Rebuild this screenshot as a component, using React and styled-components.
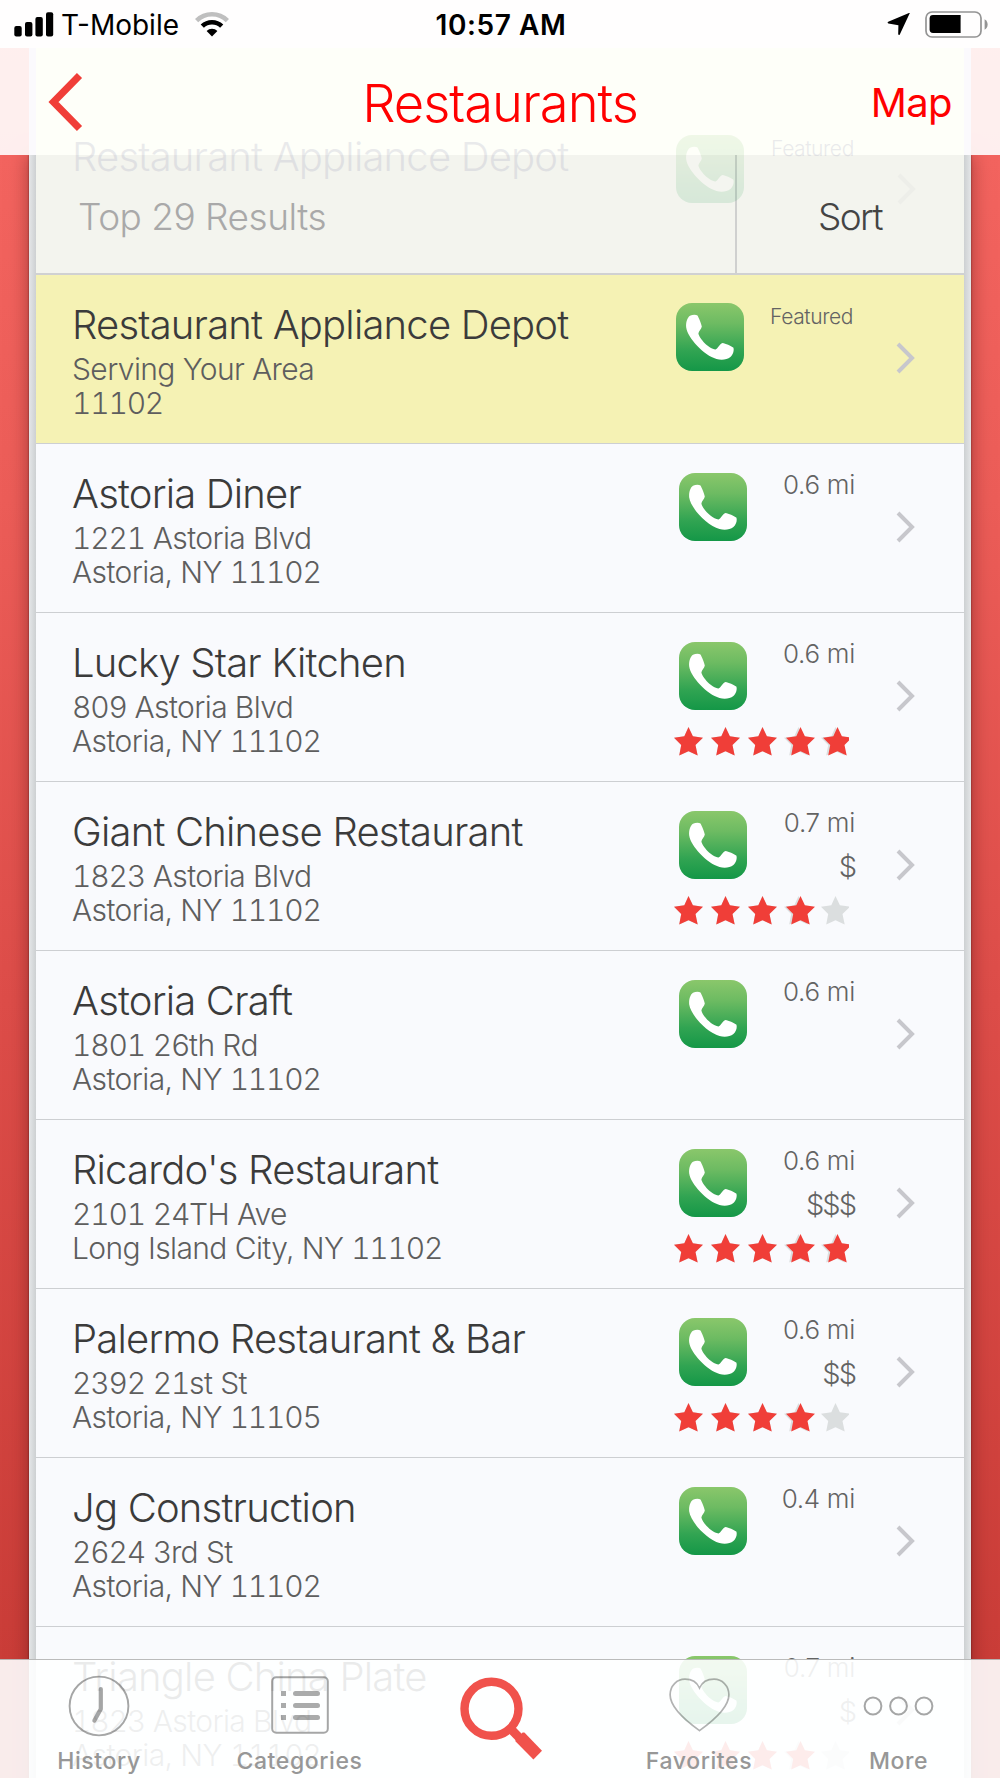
import React from 'react';
import styled, { createGlobalStyle, css } from 'styled-components';

const GlobalStyle = createGlobalStyle`
  * {
    box-sizing: border-box;
  }

  body {
    margin: 0;
    font-family: Inter, 'Liberation Sans', sans-serif;
    font-weight: 300;
  }
`;

const RESTAURANTS = [
  { name: 'Restaurant Appliance Depot', lines: ['Serving Your Area', '11102'], featured: true },
  { name: 'Astoria Diner', lines: ['1221 Astoria Blvd', 'Astoria, NY 11102'], distance: '0.6 mi' },
  { name: 'Lucky Star Kitchen', lines: ['809 Astoria Blvd', 'Astoria, NY 11102'], distance: '0.6 mi', rating: 5 },
  { name: 'Giant Chinese Restaurant', lines: ['1823 Astoria Blvd', 'Astoria, NY 11102'], distance: '0.7 mi', price: '$', rating: 4 },
  { name: 'Astoria Craft', lines: ['1801 26th Rd', 'Astoria, NY 11102'], distance: '0.6 mi' },
  { name: "Ricardo's Restaurant", lines: ['2101 24TH Ave', 'Long Island City, NY 11102'], distance: '0.6 mi', price: '$$$', rating: 5 },
  { name: 'Palermo Restaurant & Bar', lines: ['2392 21st St', 'Astoria, NY 11105'], distance: '0.6 mi', price: '$$', rating: 4 },
  { name: 'Jg Construction', lines: ['2624 3rd St', 'Astoria, NY 11102'], distance: '0.4 mi' },
  { name: 'Triangle China Plate', lines: ['1823 Astoria Blvd', 'Astoria, NY 11102'], distance: '0.7 mi', price: '$', rating: 4 },
];

const STARS = [1, 2, 3, 4, 5];

const PhoneIcon = () => (
  <svg width="68" height="68" viewBox="0 0 68 68">
    <defs>
      <linearGradient id="call" x1="0" y1="0" x2="0" y2="1">
        <stop offset="0" stopColor="#8ac76b" />
        <stop offset="0.3" stopColor="#6dbb62" />
        <stop offset="0.7" stopColor="#31a452" />
        <stop offset="1" stopColor="#149747" />
      </linearGradient>
    </defs>
    <rect width="68" height="68" rx="16" fill="url(#call)" />
    <path
      fill="#fff"
      d="M14 12.8 C16.5 11.6 19.8 11.4 21.5 12.6 C22.8 14.8 25 20 25.8 23.4 C25.6 26 22.6 28 22.4 30.5 C23.2 35.5 33 46 39.5 46.4 C42 45.6 43.5 41 46.5 40 C49.5 40.4 55 42.8 57.3 44.6 C58.4 46.8 57.3 51.6 54.4 54 C51 56.8 45.4 57.3 40.5 56 C28 52.6 11.6 35 10.2 24.6 C9.7 19.5 11.2 14.6 14 12.8 Z"
    />
  </svg>
);

const ChevronIcon = () => (
  <svg width="20" height="32" viewBox="0 0 20 32">
    <path d="M2 2 L16 16 L2 30" fill="none" stroke="#c7c7cc" strokeWidth="4" />
  </svg>
);

const StarIcon = ({ color }) => (
  <svg width="29" height="29" viewBox="0 0 29 29">
    <path
      fill={color}
      d="M14.5 0 L18.9 9.3 L29 10.7 L21.5 18 L23.7 28.6 L14.5 24.2 L5.2 28.6 L7.2 18 L0 10.7 L10.3 9.3 Z"
    />
  </svg>
);

const SignalIcon = () => (
  <svg width="40" height="26" viewBox="0 0 40 26">
    <rect x="0.3" y="14" width="7.4" height="10.5" rx="2" />
    <rect x="11" y="10" width="7.4" height="14.5" rx="2" />
    <rect x="21.4" y="5" width="7.4" height="19.5" rx="2" />
    <rect x="32" y="0.3" width="7.2" height="24.2" rx="2" />
  </svg>
);

const WifiIcon = () => (
  <svg width="34" height="25" viewBox="0 0 34 25">
    <path d="M1.6 8.6 A22 22 0 0 1 32.4 8.6" fill="none" stroke="#bfbfbf" strokeWidth="4.6" />
    <path d="M7.3 14.2 A14 14 0 0 1 26.7 14.2" fill="none" stroke="#000" strokeWidth="4.6" />
    <path d="M17 24.5 L11.6 19 A7.8 7.8 0 0 1 22.4 19 Z" />
  </svg>
);

const LocationIcon = () => (
  <svg width="24" height="23" viewBox="0 0 24 23">
    <path d="M22.6 0.6 L12.8 21.4 Q11.6 22.8 11.2 21 L11.4 12.2 L1.4 10.4 Q-0.4 9.4 1.8 8.4 L21.4 0.2 Q23.4 -0.6 22.6 0.6 Z" />
  </svg>
);

const BatteryIcon = () => (
  <svg width="63" height="27" viewBox="0 0 63 27">
    <rect x="1" y="1" width="55" height="25" rx="6" fill="none" stroke="#949494" strokeWidth="1.7" />
    <path d="M59.6 8.2 Q62.6 10 62.6 13.5 Q62.6 17 59.6 18.8 Z" fill="#949494" />
    <path d="M8 4 H35.6 V22 H8 Q4.6 22 4.6 18.6 V7.4 Q4.6 4 8 4 Z" />
  </svg>
);

const BackIcon = () => (
  <svg width="36" height="60" viewBox="0 0 36 60">
    <path d="M31.5 3.5 L5.5 30 L31.5 56.5" fill="none" stroke="#f03e38" strokeWidth="7.2" />
  </svg>
);

const HistoryIcon = () => (
  <svg width="62" height="62" viewBox="0 0 62 62" fill="none" stroke="#000" strokeOpacity="0.35">
    <circle cx="31" cy="31" r="29.4" strokeWidth="1.9" />
    <path d="M32.8 14 V34 L26.4 45.6" strokeWidth="4.2" strokeLinecap="round" strokeLinejoin="round" />
  </svg>
);

const CategoriesIcon = () => (
  <svg width="58" height="58" viewBox="0 0 58 58">
    <rect x="1.2" y="1.2" width="55.6" height="55.6" rx="4" fill="none" stroke="#000" strokeOpacity="0.35" strokeWidth="2" />
    {[15, 27, 39].map((y) => (
      <g key={y} fill="#000" fillOpacity="0.33">
        <rect x="10" y={y} width="5" height="5" />
        <rect x="22" y={y} width="27" height="5" rx="2.5" />
      </g>
    ))}
  </svg>
);

const SearchIcon = () => (
  <svg width="82" height="84" viewBox="0 0 82 84">
    <circle cx="31.5" cy="31.8" r="27" fill="none" stroke="#f0524c" strokeWidth="8.4" />
    <path d="M49.5 50.5 L62 63.5" stroke="#f0524c" strokeWidth="9" />
    <path d="M62.6 55.6 L64.4 55.6 L82 73.8 L73.4 82.4 L55.4 64.2 L55.6 62.4 Z" fill="#f0524c" />
  </svg>
);

const HeartIcon = () => (
  <svg width="61" height="54" viewBox="0 0 61 54">
    <path
      d="M30.5 52.6 C19 44.4 1.1 29.4 1.1 16.8 C1.1 7.6 8 1.2 16 1.2 C22.6 1.2 28 4.4 30.5 10 C33 4.4 38.4 1.2 45 1.2 C53 1.2 59.9 7.6 59.9 16.8 C59.9 29.4 42 44.4 30.5 52.6 Z"
      fill="none"
      stroke="#000"
      strokeOpacity="0.3"
      strokeWidth="1.7"
    />
  </svg>
);

const MoreIcon = () => (
  <svg width="71" height="20" viewBox="0 0 71 20" fill="none" stroke="#000" strokeOpacity="0.35" strokeWidth="2">
    <circle cx="10" cy="10" r="8.4" />
    <circle cx="35.5" cy="10" r="8.4" />
    <circle cx="61" cy="10" r="8.4" />
  </svg>
);

// digits get their own even spacing inside an address line
const withDigits = (text) =>
  text.split(/(\d+)/).map((part, i) => (i % 2 ? <Digits key={i}>{part}</Digits> : part));

const Rating = ({ value }) => (
  <Stars>
    <Strip $gap={7.75}>
      {STARS.map((n) => (
        <StarIcon key={n} color="#dbdedf" />
      ))}
    </Strip>
    <Strip $gap={8.2}>
      {STARS.slice(0, value).map((n) => (
        <StarIcon key={n} color="#f03e38" />
      ))}
    </Strip>
  </Stars>
);

const Row = ({ name, lines, featured, distance, price, rating }) => (
  <RowBox $featured={featured}>
    <Info>
      <Name>{name}</Name>
      {lines.map((line) => (
        <Line key={line}>{withDigits(line)}</Line>
      ))}
    </Info>
    <Side>
      <Facts $featured={featured}>
        <PhoneIcon />
        <Numbers>
          {featured ? <Tag>Featured</Tag> : <Distance>{distance}</Distance>}
          {price && <Price>{price}</Price>}
        </Numbers>
      </Facts>
      {rating && <Rating value={rating} />}
    </Side>
    <ChevronIcon />
  </RowBox>
);

const App = () => (
  <Screen>
    <GlobalStyle />
    <Header>
      <StatusBar>
        <Carrier>
          <SignalIcon />
          <CarrierName>T-Mobile</CarrierName>
          <WifiIcon />
        </Carrier>
        <Clock>10:57 AM</Clock>
        <Power>
          <LocationIcon />
          <BatteryIcon />
        </Power>
      </StatusBar>
      <NavBar>
        <NavTint />
        <BackButton>
          <BackIcon />
        </BackButton>
        <Title>Restaurants</Title>
        <MapLink>Map</MapLink>
      </NavBar>
    </Header>

    <Panel>
      <SortBar>
        <Count>Top 29 Results</Count>
        <Sort>Sort</Sort>
      </SortBar>
      {RESTAURANTS.map((item) => (
        <Row key={item.name} {...item} />
      ))}
    </Panel>

    {/* the row that has scrolled up under the header */}
    <Scrolled>
      <ScrolledName>Restaurant Appliance Depot</ScrolledName>
      <PhoneIcon />
      <ScrolledTag>Featured</ScrolledTag>
      <ChevronIcon />
    </Scrolled>

    <TabBar>
      <Tab $width={198}>
        <IconSlot $top={15}><HistoryIcon /></IconSlot>
        <Label>History</Label>
      </Tab>
      <Tab $width={203}>
        <IconSlot $top={16}><CategoriesIcon /></IconSlot>
        <Label>Categories</Label>
      </Tab>
      <Tab $width={200}>
        <IconSlot $top={17}><SearchIcon /></IconSlot>
      </Tab>
      <Tab $width={196}>
        <IconSlot $top={18}><HeartIcon /></IconSlot>
        <Label>Favorites</Label>
      </Tab>
      <Tab $width={203}>
        <IconSlot $top={36}><MoreIcon /></IconSlot>
        <Label>More</Label>
      </Tab>
    </TabBar>
  </Screen>
);

const Screen = styled.div`
  position: relative;
  width: 1000px;
  height: 1778px;
  overflow: hidden;
  background: linear-gradient(#f86a64 0, #f3645f 155px, #ec5d58 500px, #dd4d49 1000px, #ca3d38 1660px);
`;

const Header = styled.header`
  position: relative;
  height: 155px;
`;

const StatusBar = styled.div`
  display: grid;
  grid-template-columns: 1fr 140px 1fr;
  align-items: center;
  height: 48px;
  padding: 0 12px 0 14px;
  background: #fffefe;
`;

const Carrier = styled.div`
  display: flex;
  align-items: center;
`;

const CarrierName = styled.span`
  margin: 0 16px 0 7px;
  padding-top: 1px;
  font-size: 28px;
  font-weight: 400;
  line-height: 48px;
`;

const Clock = styled.div`
  padding-top: 1px;
  text-align: center;
  white-space: nowrap;
  font-size: 28px;
  font-weight: 600;
  letter-spacing: 0.6px;
`;

const Power = styled.div`
  display: flex;
  align-items: center;
  justify-content: flex-end;
  gap: 14px;
`;

const NavBar = styled.div`
  position: relative;
  display: grid;
  grid-template-columns: 200px 1fr 200px;
  align-items: center;
  height: 107px;
  padding: 0 48px;
  background: rgba(255, 255, 255, 0.895);
`;

const NavTint = styled.div`
  position: absolute;
  inset: 0 29px;
  background: #fefff9;
  border: solid #fbfafd;
  border-width: 0 7px;
`;

const BackButton = styled.div`
  position: relative;
  display: flex;
`;

const Title = styled.h1`
  position: relative;
  margin: 0;
  padding-top: 3px;
  text-align: center;
  font-size: 52.5px;
  font-weight: 300;
  line-height: 60px;
  letter-spacing: -1px;
  color: #f00;
`;

const MapLink = styled.a`
  position: relative;
  padding-top: 1px;
  text-align: right;
  font-size: 40px;
  font-weight: 400;
  letter-spacing: -0.6px;
  color: #f00;
`;

const Panel = styled.main`
  margin: 0 29px;
  padding: 0 7px;
  background: linear-gradient(90deg, #e4e6e8 0, #cdd0d2 7px, #cdd0d2 935px, #e4e6e8 942px);
  box-shadow: 0 0 18px rgba(90, 20, 20, 0.5), 0 0 2px rgba(0, 0, 0, 0.5);
`;

const SortBar = styled.div`
  display: grid;
  grid-template-columns: 1fr 229px;
  height: 120px;
  border-bottom: 2px solid #d0d1d2;
  background: #f3f4ee;
`;

const barText = css`
  padding-top: 40px;
  font-size: 37px;
  line-height: 44px;
`;

const Count = styled.div`
  ${barText}
  padding-left: 42px;
  letter-spacing: -0.5px;
  color: #a9a9a9;
`;

const Sort = styled.div`
  ${barText}
  padding-left: 81px;
  border-left: 2px solid #cfd0cf;
  letter-spacing: -1.6px;
  color: #444;
`;

const RowBox = styled.article`
  display: grid;
  grid-template-columns: 1fr 223px 20px;
  height: 169px;
  padding: 28px 48px 0 36px;
  border-bottom: 1px solid #cdcfd2;
  background: ${(p) => (p.$featured ? '#f5f2b4' : '#f9fafd')};

  > svg {
    margin-top: 39px;
  }
`;

const Info = styled.div`
  white-space: nowrap;
`;

const Name = styled.h2`
  margin: 0 0 5px;
  font-size: 40px;
  font-weight: 300;
  line-height: 44px;
  letter-spacing: -0.8px;
  color: #3b3b3b;
`;

const Line = styled.p`
  margin: 0;
  font-size: 30px;
  line-height: 34px;
  letter-spacing: -0.6px;
  color: #5e5e5e;
`;

const Digits = styled.span`
  font-variant-numeric: tabular-nums;
  letter-spacing: -1.2px;
`;

const Side = styled.div`
  display: flex;
  flex-direction: column;
`;

const Facts = styled.div`
  display: flex;
  justify-content: space-between;
  height: 69px;
  padding-left: ${(p) => (p.$featured ? 3 : 6)}px;
  padding-right: 41px;

  > svg {
    margin-top: ${(p) => (p.$featured ? 0 : 1)}px;
  }
`;

const Numbers = styled.div`
  text-align: right;
  color: #636363;
`;

const Distance = styled.div`
  font-size: 26px;
  line-height: 25px;
  letter-spacing: -0.3px;
`;

const Tag = styled.div`
  padding-right: 2px;
  font-size: 21px;
  line-height: 28px;
  letter-spacing: -0.4px;
`;

const Price = styled.div`
  margin-top: 15px;
  font-size: 29px;
  line-height: 33px;
  letter-spacing: -2px;
`;

const Stars = styled.div`
  display: grid;
  width: 175px;
  margin: 17px 0 0 1px;
  overflow: hidden;
`;

const Strip = styled.div`
  display: flex;
  grid-area: 1 / 1;
  gap: ${(p) => p.$gap}px;

  > svg {
    flex: none;
  }
`;

const Scrolled = styled.div`
  position: absolute;
  top: 106px;
  left: 36px;
  display: grid;
  grid-template-columns: 604px 95px 126px 20px;
  width: 928px;
  height: 168px;
  padding: 29px 0 0 36px;
  opacity: 0.12;

  > svg:last-child {
    margin-top: 38px;
  }
`;

const ScrolledName = styled(Name)`
  color: #5a5a90;
`;

const ScrolledTag = styled(Tag)`
  color: #5a5a90;
`;

const TabBar = styled.nav`
  position: absolute;
  left: 0;
  bottom: 0;
  display: flex;
  width: 1000px;
  height: 119px;
  border-top: 1px solid rgba(120, 120, 120, 0.5);
  background: rgba(254, 255, 255, 0.9);
`;

const Tab = styled.div`
  display: flex;
  flex-direction: column;
  align-items: center;
  justify-content: space-between;
  width: ${(p) => p.$width}px;
`;

const IconSlot = styled.div`
  height: 82px;
  padding-top: ${(p) => p.$top}px;
`;

const Label = styled.div`
  height: 31px;
  font-size: 23px;
  font-weight: 500;
  line-height: 28px;
  letter-spacing: 0.6px;
  color: #979797;
`;

export default App;
